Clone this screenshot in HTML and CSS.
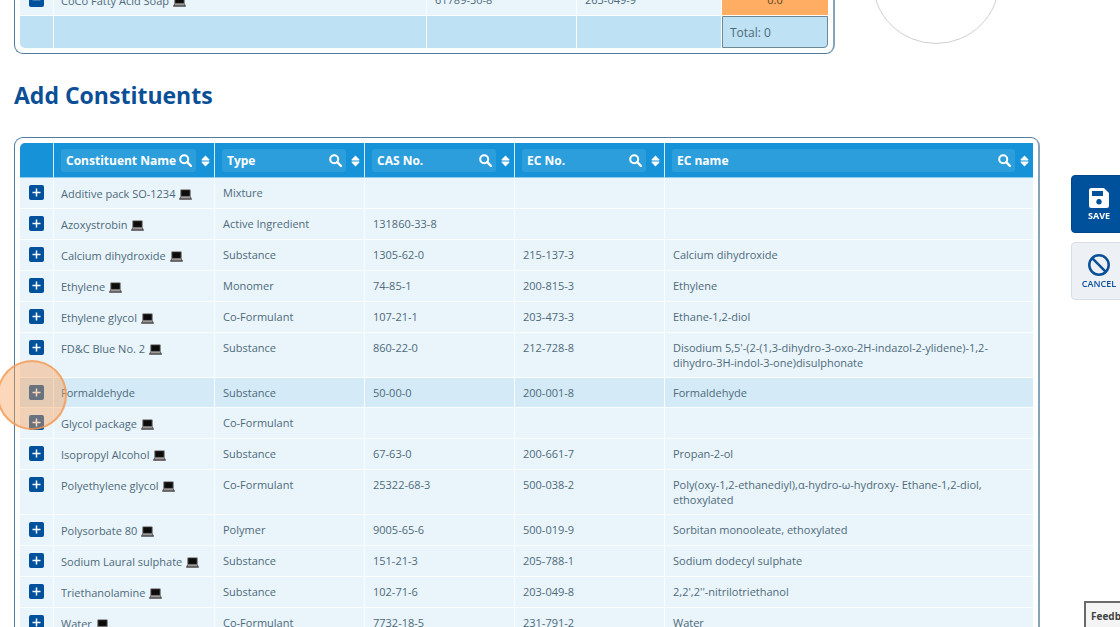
FILE: index.html
```html
<!DOCTYPE html>
<html lang="en">
<head>
  <meta charset="utf-8">
  <title>Add Constituents</title>
  <link rel="stylesheet" href="styles.css">
</head>
<body>
  <svg class="sprite" aria-hidden="true">
    <symbol id="plus" viewBox="0 0 15 15"><path d="M7.5 3.5v8M3.5 7.5h8" stroke="currentColor" stroke-width="1.5" fill="none"/></symbol>
    <symbol id="minus" viewBox="0 0 15 15"><path d="M3.5 7.5h8" stroke="currentColor" stroke-width="1.5"/></symbol>
    <symbol id="laptop" viewBox="0 0 13 11">
      <path d="M2 0.4h9q.6 0 .6.6v6.6H1.4V1q0-.6.6-.6z" fill="#55504e"/>
      <path d="M2.4 1.3h8.2v5.6H2.4z" fill="#0c0c0c"/>
      <path d="M1.4 7.6h10.2l1.2 2.2v.9H.2v-.9z" fill="#4a4747"/>
      <path d="M1.8 8.3h9.4l.5 1H1.3z" fill="#b9b5b3"/>
    </symbol>
    <symbol id="search" viewBox="0 0 13 13"><circle cx="5.2" cy="5.2" r="4" stroke="currentColor" stroke-width="2" fill="none"/><path d="M8.2 8.2l3.8 3.8" stroke="currentColor" stroke-width="2.4" stroke-linecap="round"/></symbol>
    <symbol id="sort" viewBox="0 0 9 12"><path d="M4.5.4l3.9 4q.4 1-.5 1H1.1q-.9 0-.5-1zM4.5 11.6l3.9-4q.4-1-.5-1H1.1q-.9 0-.5 1z" fill="currentColor"/></symbol>
  </svg>

  <main class="page">
    <section class="summary">
      <div class="card selected-card">
        <table class="grid selected">
          <colgroup><col class="col-action"><col><col class="col-code"><col class="col-ec"><col class="col-total"></colgroup>
          <tbody>
            <tr>
              <td class="action"><button class="square" aria-label="Remove"><svg><use href="#minus"/></svg></button></td>
              <td class="named">CoCo Fatty Acid Soap <svg class="laptop"><use href="#laptop"/></svg></td>
              <td>61789-30-8</td>
              <td>263-049-9</td>
              <td class="amount">0.0</td>
            </tr>
          </tbody>
          <tfoot>
            <tr><td></td><td></td><td></td><td></td><td class="total">Total: 0</td></tr>
          </tfoot>
        </table>
      </div>
      <div class="chart"></div>
    </section>

    <h2>Add Constituents</h2>

    <div class="card">
      <table class="grid">
        <colgroup><col class="col-action"><col class="col-name"><col class="col-code"><col class="col-code"><col class="col-code"><col></colgroup>
        <thead>
          <tr>
            <th></th>
            <th><div class="head"><label class="filter"><input type="text" placeholder="Constituent Name" aria-label="Constituent Name"><svg><use href="#search"/></svg></label><button class="sort" aria-label="Sort"><svg><use href="#sort"/></svg></button></div></th>
            <th><div class="head"><label class="filter"><input type="text" placeholder="Type" aria-label="Type"><svg><use href="#search"/></svg></label><button class="sort" aria-label="Sort"><svg><use href="#sort"/></svg></button></div></th>
            <th><div class="head"><label class="filter"><input type="text" placeholder="CAS No." aria-label="CAS No."><svg><use href="#search"/></svg></label><button class="sort" aria-label="Sort"><svg><use href="#sort"/></svg></button></div></th>
            <th><div class="head"><label class="filter"><input type="text" placeholder="EC No." aria-label="EC No."><svg><use href="#search"/></svg></label><button class="sort" aria-label="Sort"><svg><use href="#sort"/></svg></button></div></th>
            <th><div class="head"><label class="filter"><input type="text" placeholder="EC name" aria-label="EC name"><svg><use href="#search"/></svg></label><button class="sort" aria-label="Sort"><svg><use href="#sort"/></svg></button></div></th>
          </tr>
        </thead>
        <tbody>
          <tr>
            <td class="action"><button class="square" aria-label="Add"><svg><use href="#plus"/></svg></button></td>
            <td class="named">Additive pack SO-1234 <svg class="laptop"><use href="#laptop"/></svg></td>
            <td>Mixture</td><td></td><td></td><td></td>
          </tr>
          <tr>
            <td class="action"><button class="square" aria-label="Add"><svg><use href="#plus"/></svg></button></td>
            <td class="named">Azoxystrobin <svg class="laptop"><use href="#laptop"/></svg></td>
            <td>Active Ingredient</td><td>131860-33-8</td><td></td><td></td>
          </tr>
          <tr>
            <td class="action"><button class="square" aria-label="Add"><svg><use href="#plus"/></svg></button></td>
            <td class="named">Calcium dihydroxide <svg class="laptop"><use href="#laptop"/></svg></td>
            <td>Substance</td><td>1305-62-0</td><td>215-137-3</td><td>Calcium dihydroxide</td>
          </tr>
          <tr>
            <td class="action"><button class="square" aria-label="Add"><svg><use href="#plus"/></svg></button></td>
            <td class="named">Ethylene <svg class="laptop"><use href="#laptop"/></svg></td>
            <td>Monomer</td><td>74-85-1</td><td>200-815-3</td><td>Ethylene</td>
          </tr>
          <tr>
            <td class="action"><button class="square" aria-label="Add"><svg><use href="#plus"/></svg></button></td>
            <td class="named">Ethylene glycol <svg class="laptop"><use href="#laptop"/></svg></td>
            <td>Co-Formulant</td><td>107-21-1</td><td>203-473-3</td><td>Ethane-1,2-diol</td>
          </tr>
          <tr>
            <td class="action"><button class="square" aria-label="Add"><svg><use href="#plus"/></svg></button></td>
            <td class="named">FD&amp;C Blue No. 2 <svg class="laptop"><use href="#laptop"/></svg></td>
            <td>Substance</td><td>860-22-0</td><td>212-728-8</td><td class="long">Disodium 5,5'-(2-(1,3-dihydro-3-oxo-2H-indazol-2-ylidene)-1,2-dihydro-3H-indol-3-one)disulphonate</td>
          </tr>
          <tr class="hovered">
            <td class="action"><button class="square" aria-label="Add"><svg><use href="#plus"/></svg></button><span class="click-marker"></span></td>
            <td>Formaldehyde</td>
            <td>Substance</td><td>50-00-0</td><td>200-001-8</td><td>Formaldehyde</td>
          </tr>
          <tr>
            <td class="action"><button class="square" aria-label="Add"><svg><use href="#plus"/></svg></button></td>
            <td class="named">Glycol package <svg class="laptop"><use href="#laptop"/></svg></td>
            <td>Co-Formulant</td><td></td><td></td><td></td>
          </tr>
          <tr>
            <td class="action"><button class="square" aria-label="Add"><svg><use href="#plus"/></svg></button></td>
            <td class="named">Isopropyl Alcohol <svg class="laptop"><use href="#laptop"/></svg></td>
            <td>Substance</td><td>67-63-0</td><td>200-661-7</td><td>Propan-2-ol</td>
          </tr>
          <tr>
            <td class="action"><button class="square" aria-label="Add"><svg><use href="#plus"/></svg></button></td>
            <td class="named">Polyethylene glycol <svg class="laptop"><use href="#laptop"/></svg></td>
            <td>Co-Formulant</td><td>25322-68-3</td><td>500-038-2</td><td class="long">Poly(oxy-1,2-ethanediyl),α-hydro-ω-hydroxy- Ethane-1,2-diol, ethoxylated</td>
          </tr>
          <tr>
            <td class="action"><button class="square" aria-label="Add"><svg><use href="#plus"/></svg></button></td>
            <td class="named">Polysorbate 80 <svg class="laptop"><use href="#laptop"/></svg></td>
            <td>Polymer</td><td>9005-65-6</td><td>500-019-9</td><td>Sorbitan monooleate, ethoxylated</td>
          </tr>
          <tr>
            <td class="action"><button class="square" aria-label="Add"><svg><use href="#plus"/></svg></button></td>
            <td class="named">Sodium Laural sulphate <svg class="laptop"><use href="#laptop"/></svg></td>
            <td>Substance</td><td>151-21-3</td><td>205-788-1</td><td>Sodium dodecyl sulphate</td>
          </tr>
          <tr>
            <td class="action"><button class="square" aria-label="Add"><svg><use href="#plus"/></svg></button></td>
            <td class="named">Triethanolamine <svg class="laptop"><use href="#laptop"/></svg></td>
            <td>Substance</td><td>102-71-6</td><td>203-049-8</td><td>2,2',2''-nitrilotriethanol</td>
          </tr>
          <tr>
            <td class="action"><button class="square" aria-label="Add"><svg><use href="#plus"/></svg></button></td>
            <td class="named">Water <svg class="laptop"><use href="#laptop"/></svg></td>
            <td>Co-Formulant</td><td>7732-18-5</td><td>231-791-2</td><td>Water</td>
          </tr>
        </tbody>
      </table>
    </div>
  </main>

  <div class="actions">
    <button class="tool save">
      <svg viewBox="0 0 20 20"><path fill-rule="evenodd" d="M2.5 0h12.4L20 5v12.5q0 2.5-2.5 2.5h-15Q0 20 0 17.500v-15Q0 0 2.500 0zM3 3v5h11V3zM10 11a2.800 2.800 0 1 0 .01 0z" fill="currentColor"/></svg>
      Save
    </button>
    <button class="tool cancel">
      <svg viewBox="0 0 22 22"><circle cx="11" cy="11" r="9.700" stroke="currentColor" stroke-width="2.500" fill="none"/><path d="M4.200 4.200l13.600 13.600" stroke="currentColor" stroke-width="2.500"/></svg>
      Cancel
    </button>
  </div>

  <button class="feedback">Feedback</button>
</body>
</html>
```
FILE: styles.css
```css
body {
  margin: 0;
  height: 100vh;
  overflow: hidden;
  background: #fff;
  color: #4f6b7a;
  font-family: 'Open Sans', sans-serif;
  font-size: 11px;
  line-height: 15px;
}

button,
input {
  font-family: inherit;
}

.sprite {
  display: none;
}

/* scrolled part way down the form */
.page {
  margin-top: -84px;
  padding: 0 80px 0 14px;
}

.summary {
  display: flex;
  align-items: flex-end;
  gap: 37px;
  height: 138px;
}

.card {
  padding: 5px;
  border: 1px solid #4f7d9b;
  border-right: 2px solid #86a5b8;
  border-radius: 9px;
}

.selected-card {
  flex: 0 1 808px;
}

.chart {
  flex: none;
  width: 126px;
  height: 126px;
  margin-bottom: 10px;
  border: 1px solid #cfcfcf;
  border-radius: 50%;
}

h2 {
  margin: 24px 0;
  color: #0b4f96;
  font-size: 23px;
  font-weight: 700;
  line-height: 35px;
}

.grid {
  width: 100%;
  table-layout: fixed;
  border-spacing: 0;
}

.col-action { width: 34px; }
.col-name { width: 161px; }
.col-code { width: 150px; }
.col-ec { width: 145px; }
.col-total { width: 106px; }

th {
  padding: 6px 4px 5px 7px;
  height: 23px;
  background: #1592d8;
  border-right: 1px solid #d5ecf8;
  border-bottom: 1px solid #8ccbee;
}

th:first-child {
  border-top-left-radius: 5px;
}

th:last-child,
td:last-child {
  border-right: none;
}

.head {
  display: flex;
  align-items: center;
  gap: 5px;
}

.filter {
  display: flex;
  flex: 1;
  min-width: 0;
  align-items: center;
  height: 23px;
  padding: 0 4px 0 5px;
  border-radius: 3px;
  background: #2c9edc;
  color: #fff;
}

.filter input {
  flex: 1;
  min-width: 0;
  padding: 0;
  border: none;
  outline: none;
  background: none;
  color: #fff;
  font-size: 12px;
  font-weight: 700;
}

.filter input::placeholder {
  color: #fff;
  opacity: 1;
}

.filter svg {
  width: 13px;
  height: 13px;
}

.sort {
  padding: 0;
  border: none;
  background: none;
  color: #fff;
  line-height: 0;
}

.sort svg {
  width: 9px;
  height: 12px;
}

td {
  padding: 7px 8px;
  background: #e9f4fb;
  border-right: 1px solid #fbfeff;
  border-bottom: 1px solid #fbfeff;
  vertical-align: top;
}

td:nth-child(2) {
  padding-left: 7px;
}

td.named {
  padding-top: 8px;
  white-space: nowrap;
}

td.long {
  padding-right: 24px;
}

td.action {
  position: relative;
  padding: 7px 0;
  text-align: center;
  line-height: 0;
}

.hovered td {
  background: #d4eaf7;
}

.square {
  width: 15px;
  height: 15px;
  padding: 0;
  border: none;
  border-radius: 2px;
  background: #00519c;
  color: #fff;
}

.square svg {
  width: 15px;
  height: 15px;
}

.laptop {
  width: 13px;
  height: 11px;
  margin-left: 1px;
  vertical-align: -2px;
}

.click-marker {
  position: absolute;
  top: -18px;
  left: -23px;
  z-index: 1;
  box-sizing: border-box;
  width: 70px;
  height: 70px;
  border: 2px solid rgba(244, 151, 80, 0.75);
  border-radius: 50%;
  background: rgba(250, 159, 88, 0.42);
  pointer-events: none;
}

.selected .amount {
  background: #ffad63;
  color: #5b3d20;
  text-align: center;
}

tfoot td {
  height: 15px;
  border-bottom: none;
  background: #bee1f3;
}

tfoot td:first-child {
  border-bottom-left-radius: 5px;
}

tfoot td.total {
  padding: 8px 7px 7px;
  border: 1px solid #6d8796;
  border-bottom-right-radius: 4px;
  font-size: 12px;
}

.actions {
  position: fixed;
  top: 175px;
  right: -7px;
  display: flex;
  flex-direction: column;
  gap: 9px;
}

.tool {
  display: flex;
  flex-direction: column;
  align-items: center;
  justify-content: center;
  gap: 1px;
  width: 56px;
  height: 58px;
  padding: 2px 0 0;
  border: 1px solid #d6dfe6;
  border-radius: 4px;
  background: #edf1f6;
  color: #0b4f96;
  font-size: 9px;
  font-weight: 600;
  line-height: 13px;
  text-transform: uppercase;
}

.tool svg {
  width: 22px;
  height: 22px;
}

.tool.save {
  border-color: #00468a;
  background: #00519c;
  color: #fff;
  font-weight: 700;
}

.tool.save svg {
  width: 20px;
  height: 20px;
}

.feedback {
  position: fixed;
  right: -32px;
  bottom: -4px;
  width: 68px;
  height: 30px;
  padding: 0 5px;
  border: 2px solid #6a6a6a;
  background: #f4f4f4;
  color: #444;
  font-size: 10px;
  font-weight: 700;
  text-align: left;
}
```
